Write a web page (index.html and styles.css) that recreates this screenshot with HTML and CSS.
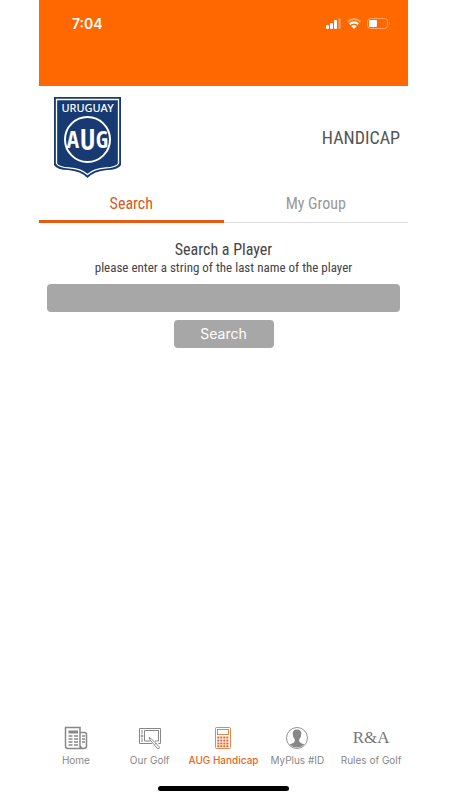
FILE: index.html
```html
<!DOCTYPE html>
<html lang="en">
<head>
<meta charset="utf-8">
<meta name="viewport" content="width=device-width, initial-scale=1">
<title>AUG Handicap</title>
<link rel="stylesheet" href="styles.css">
</head>
<body>
<div class="app">
  <div class="status">
    <span class="clock">7:04</span>
    <svg class="indicators" width="66" height="14" viewBox="0 0 66 14" aria-hidden="true">
      <g fill="#fff">
        <rect x="0" y="8" width="3" height="4" rx="1"/>
        <rect x="4" y="6" width="3" height="6" rx="1"/>
        <rect x="8" y="3" width="3" height="9" rx="1"/>
        <rect x="12" y="1" width="3" height="11" rx="1" opacity=".25"/>
      </g>
      <g fill="none" stroke="#fff" stroke-width="2">
        <path d="M21.500 4.800Q28 -.8 34.500 4.800" opacity=".4"/>
        <path d="M23.600 7.300Q28 3.500 32.400 7.300"/>
      </g>
      <path fill="#fff" d="M25.300 9Q28 6.900 30.700 9L28 12z"/>
      <rect x="41.500" y="1.500" width="20" height="10" rx="3" fill="none" stroke="#fff" opacity=".4"/>
      <path d="M63 4.500q2 2 0 4z" fill="#fff" opacity=".4"/>
      <rect x="43" y="3" width="8" height="7" rx="1" fill="#fff"/>
    </svg>
  </div>

  <header class="header">
    <svg class="crest" width="67" height="81" viewBox="0 0 67 81" role="img" aria-label="Uruguay AUG">
      <path d="M0 0H67V68Q64 73 53 73Q40 74 33.500 81Q27 74 14 73Q3 73 0 68z" fill="#183a73"/>
      <path d="M2.500 2.500H64.500V66.500Q62 70.500 52 70.800Q40 71.500 33.500 77.500Q27 71.500 15 70.800Q5 70.500 2.500 66.500z" fill="none" stroke="#fff" stroke-width="1.300"/>
      <text class="crest-name" x="33.500" y="15" text-anchor="middle">URUGUAY</text>
      <circle cx="33.500" cy="42.500" r="22.500" fill="none" stroke="#fff" stroke-width="2"/>
      <g class="crest-letters" text-anchor="middle">
        <text class="side" x="19" y="51">A</text>
        <text class="middle" x="33.500" y="53">U</text>
        <text class="side" x="48" y="51">G</text>
      </g>
    </svg>
    <h1 class="title">HANDICAP</h1>
  </header>

  <nav class="tabs">
    <a class="tab active" href="#search">Search</a>
    <a class="tab" href="#group">My Group</a>
  </nav>

  <main class="main">
    <form class="form">
      <label class="label" for="player">Search a Player <span class="hint">please enter a string of the last name of the player</span></label>
      <input class="field" id="player" type="text">
      <button class="submit" type="button">Search</button>
    </form>
  </main>

  <nav class="bottom">
    <a class="item" href="#home">
      <svg class="icon" viewBox="0 0 24 24" aria-hidden="true"><g fill="none" stroke="currentColor">
        <path d="M3.500 1.500H16V20Q16 22.500 18.500 22.500H4Q1.500 22.500 1.500 20V1.500zM16 6.500H20.500Q22.500 6.500 22.500 8.500V20Q22.500 22.500 19.500 22.500Q16.500 22.500 16.500 20" stroke-width="1.500"/>
        <path d="M4.500 6H14" stroke-width="3"/><path d="M4.500 10H8.500M10 10H14M4.500 13H8.500M10 13H14M4.500 16H8.500M10 16H14M4.500 19H8.500M10 19H14M18 10H21M18 13H21M18 16H21" stroke-width="1.600"/>
      </g></svg>
      <span>Home</span>
    </a>
    <a class="item" href="#golf">
      <svg class="icon" viewBox="0 0 24 24" aria-hidden="true"><g fill="none" stroke="currentColor">
        <path d="M14 17.500H1.500V2.500H22.500V17.500H20.500M12 15H6.500V4.500H20.500V15H17"/>
        <path d="M3 5H5M3 7H5M3 13H5M3 15H5"/><circle cx="4" cy="10" r="1"/>
        <path d="M11 11.500L13 12.500L21 20.500Q22 22 21 22.500Q20 23 19 22L12 14z" fill="#fff"/><path d="M17 18.500L18.500 17"/>
      </g></svg>
      <span>Our Golf</span>
    </a>
    <a class="item current" href="#handicap">
      <svg class="icon" viewBox="0 0 24 24" aria-hidden="true"><g fill="none" stroke="currentColor">
        <rect x="4.500" y="1.500" width="15" height="21" rx="1" stroke-width=".8"/><rect x="6.500" y="3.500" width="11" height="5" stroke-width=".8"/>
        <path d="M6.300 11.500H18M6.300 14.500H18M6.300 17.500H18M6.300 20.300H18" stroke-width="1.900" stroke-dasharray="2.100 .9"/>
      </g></svg>
      <span>AUG Handicap</span>
    </a>
    <a class="item" href="#myplus">
      <svg class="icon" viewBox="0 0 24 24" aria-hidden="true">
        <circle cx="12" cy="12" r="10.500" fill="none" stroke="currentColor" stroke-width=".9"/>
        <path fill="currentColor" d="M12 3.500Q16.500 3.500 16.300 8Q16.200 11.500 14.300 13.300V15.500Q15 17 19.500 18.600Q16.500 21.500 12 21.500Q7.500 21.500 4.500 18.600Q9 17 9.700 15.500V13.300Q7.800 11.500 7.700 8Q7.500 3.500 12 3.500z"/>
      </svg>
      <span>MyPlus #ID</span>
    </a>
    <a class="item" href="#rules">
      <span class="wordmark">R&amp;A</span>
      <span>Rules of Golf</span>
    </a>
  </nav>
  <div class="handle"></div>
</div>
</body>
</html>
```
FILE: styles.css
```css
* { box-sizing: border-box; }

body {
  margin: 0;
  padding: 0 42px 0 39px;
  background: #fff;
  color: #444;
  font-family: "Roboto Condensed", "Open Sans Condensed", Lato, sans-serif;
}

a { color: inherit; text-decoration: none; }

.app {
  display: flex;
  flex-direction: column;
  min-height: 100vh;
}

.status {
  display: flex;
  justify-content: space-between;
  align-items: flex-start;
  height: 86px;
  padding: 15px 16px 0 33px;
  background: #ff6800;
  color: #fff;
  font: 600 14px/18px Inter, sans-serif;
}

.indicators { margin-top: 2px; }

.header {
  display: flex;
  justify-content: space-between;
  align-items: center;
  padding: 11px 8px 8px 15px;
}

.crest text { fill: #fff; }
.crest-name { font: 500 11px "Noto Sans", sans-serif; }
.crest-letters { font-family: "Open Sans Condensed", sans-serif; font-weight: 700; }
.side { font-size: 23px; }
.middle { font-size: 28px; }

.title {
  margin: 0;
  color: #555;
  font-size: 18px;
  font-weight: 400;
  line-height: 24px;
}

.tabs { display: flex; }

.tab {
  flex: 1;
  height: 37px;
  padding-top: 8px;
  border-bottom: 1px solid #ddd;
  color: #999;
  font-size: 16px;
  line-height: 20px;
  text-align: center;
}

.tab.active {
  border-bottom: 3px solid #e65a14;
  color: #d9591c;
}

.main { flex: 1; }

.form {
  display: flex;
  flex-direction: column;
  align-items: center;
  gap: 8px;
  padding: 17px 8px;
}

.label {
  font-size: 16px;
  line-height: 20px;
  text-align: center;
}

.hint {
  display: block;
  font-size: 13px;
  line-height: 16px;
}

.field,
.submit {
  height: 28px;
  border: 0;
  border-radius: 4px;
  background: #a7a7a7;
  color: #fff;
  font: 14px/20px Inter, sans-serif;
}

.field { width: 100%; padding: 0 8px; }
.submit { width: 100px; }

.bottom {
  display: grid;
  grid-template-columns: repeat(5, 1fr);
  color: #888;
  font: 400 10px/12px Inter, sans-serif;
}

.item {
  display: flex;
  flex-direction: column;
  align-items: center;
  gap: 4px;
  white-space: nowrap;
}

.item.current { color: #df6826; font-weight: 500; }

.icon { width: 24px; height: 24px; }

.wordmark {
  height: 24px;
  color: #777;
  font: 400 17px/24px "Liberation Serif", serif;
}

.handle {
  width: 131px;
  height: 5px;
  margin: 20px auto 9px;
  border-radius: 3px;
  background: #000;
}
```
